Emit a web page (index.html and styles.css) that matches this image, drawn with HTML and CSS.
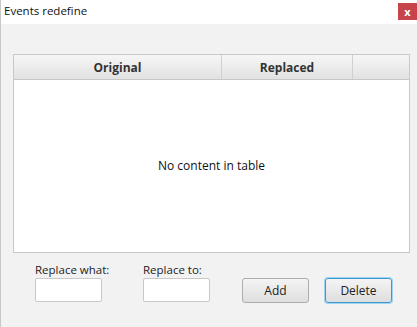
FILE: index.html
```html
<!DOCTYPE html>
<html lang="en">
<head>
    <meta charset="UTF-8">
    <title>Events redefine</title>
    <link rel="stylesheet" href="styles.css">
</head>
<body>
    <div class="window">
        <div class="titlebar">
            <span class="title">Events redefine</span>
            <button class="close-btn">x</button>
        </div>
        <div class="content">
            <div class="table">
                <div class="table-header">
                    <div class="col col-original">Original</div>
                    <div class="col col-replaced">Replaced</div>
                    <div class="col col-filler"></div>
                </div>
                <div class="table-body">No content in table</div>
            </div>
            <div class="form-row">
                <div class="field field-what">
                    <label>Replace what:</label>
                    <input type="text">
                </div>
                <div class="field field-to">
                    <label>Replace to:</label>
                    <input type="text">
                </div>
                <button class="btn btn-add">Add</button>
                <button class="btn btn-delete">Delete</button>
            </div>
        </div>
    </div>
</body>
</html>
```

FILE: styles.css
```css
body {
    margin: 0;
    font-family: 'Open Sans', 'Noto Sans', sans-serif;
    font-size: 12px;
    color: #222;
}
.window {
    width: 417px;
    height: 327px;
    background-color: #f2f2f2;
    border-left: 1px solid #c8c8c8;
    box-sizing: border-box;
    display: flex;
    flex-direction: column;
}
.titlebar {
    height: 24px;
    background-color: white;
    display: flex;
    align-items: flex-start;
    justify-content: space-between;
}
.title {
    font-size: 11.5px;
    padding: 3px 0 0 3px;
    color: #111;
}
.close-btn {
    width: 19px;
    height: 17px;
    margin-top: 3px;
    background-color: #c7444a;
    color: white;
    border: none;
    padding: 0;
    font-family: 'Open Sans', sans-serif;
    font-size: 11px;
    font-weight: bold;
    line-height: 15px;
}
.content {
    padding: 30px 7px 0 12px;
}
.table {
    border: 1px solid #c8c8c8;
    background-color: white;
    height: 199px;
    box-sizing: border-box;
    display: flex;
    flex-direction: column;
}
.table-header {
    display: flex;
    height: 24px;
    background: linear-gradient(#f6f6f6, #e2e2e2);
    border-bottom: 1px solid #c8c8c8;
}
.col {
    display: flex;
    align-items: center;
    justify-content: center;
    font-weight: bold;
    font-size: 12px;
    color: #333;
    border-right: 1px solid #d0d0d0;
}
.col-original {
    width: 207px;
}
.col-replaced {
    width: 130px;
}
.col-filler {
    flex: 1;
    border-right: none;
}
.table-body {
    flex: 1;
    display: flex;
    align-items: center;
    justify-content: center;
    font-size: 12px;
    color: #111;
    padding-bottom: 1px;
}
.form-row {
    display: flex;
    align-items: flex-end;
    margin-top: 9px;
    padding-left: 22px;
}
.field {
    display: flex;
    flex-direction: column;
    width: 67px;
}
.field label {
    font-size: 11.5px;
    color: #222;
    white-space: nowrap;
    margin-bottom: 1px;
}
.field input {
    width: 67px;
    height: 24px;
    box-sizing: border-box;
    border: 1px solid #c8c8c8;
    border-radius: 2px;
    background: white;
    margin-bottom: 1px;
}
.field-what {
    margin-right: 41px;
}
.field-to {
    margin-right: 32px;
}
.btn {
    width: 67px;
    height: 25px;
    box-sizing: border-box;
    border: 1px solid #adadad;
    border-radius: 3px;
    background: linear-gradient(#f4f4f4, #dedede);
    font-family: 'Open Sans', sans-serif;
    font-size: 12px;
    color: #222;
    padding: 0;
}
.btn-add {
    margin-right: 16px;
}
.btn-delete {
    border: 1px solid #3c9ad0;
    box-shadow: 0 0 0 1px #9fd3ef;
}
```
